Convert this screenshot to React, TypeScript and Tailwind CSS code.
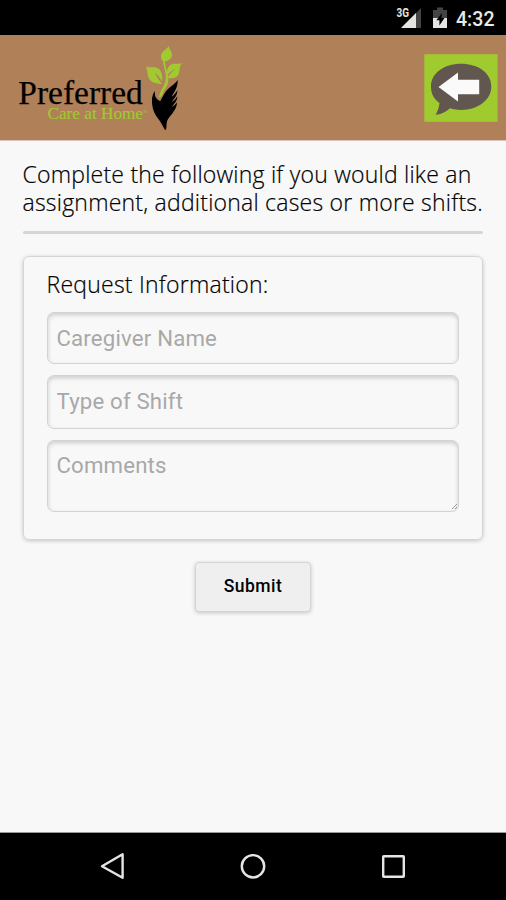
import React from "react";

function StatusBar() {
  return (
    <div className="h-[35px] shrink-0 bg-black">
      <svg width="506" height="35" viewBox="0 0 506 35" role="img" aria-label="3G, charging, 4:32">
        <path d="M421 8V28H401Z" fill="#444" />
        <path d="M416 13V28H401Z" fill="#e4e4e4" />
        <text x="396.5" y="17" fontFamily="Roboto, sans-serif" fontWeight="700" fontSize="12" textLength="12.5" lengthAdjust="spacingAndGlyphs" fill="#e4e4e4">3G</text>
        <path d="M433 10H437V7.5H443V10H447V18H433Z" fill="#444" />
        <path d="M433 18H447V28H433Z" fill="#e4e4e4" />
        <path d="M442 13L436.3 20.3H439.4V25.5L444.5 18H441.4Z" fill="#000" />
        <text x="456" y="25.8" fontFamily="Roboto, sans-serif" fontWeight="500" fontSize="19.8" textLength="38.5" lengthAdjust="spacingAndGlyphs" fill="#e8e8e8">4:32</text>
      </svg>
    </div>
  );
}

function Logo() {
  return (
    <svg width="190" height="105" viewBox="0 35 190 105" role="img" aria-label="Preferred Care at Home">
      <text x="18.3" y="104" fontFamily="'Liberation Serif', serif" fontSize="33.5" textLength="124.5" lengthAdjust="spacingAndGlyphs" fill="#000" stroke="#000" strokeWidth="0.25">Preferred</text>
      <text x="47.5" y="119" fontFamily="'Liberation Serif', serif" fontSize="17.3" textLength="95.5" lengthAdjust="spacingAndGlyphs" fill="#a2c92f" stroke="#a2c92f" strokeWidth="0.15">Care at Home</text>
      <text x="143" y="114" fontFamily="'Liberation Serif', serif" fontSize="6" fill="#a2c92f">®</text>
      <g transform="translate(140 40) scale(0.33333)">
        <path d="M45 153C35 165 35 181 37 196C39 220 55 236 63 248C69 257 70 264 77 271C82 260 77 249 84 238C92 225 111 209 111 187C107 194 100 199 95 202C101 193 112 185 112 169C108 177 101 183 96 186C101 176 113 167 112 150C109 158 101 166 95 170C100 159 114 145 113 120C106 130 94 138 84 147C74 156 69 169 61 183C53 181 42 171 45 153Z" fill="#000" />
        <path d="M69 62C71 83 79 97 77 119C75 137 60 151 57 172C64 171 66 166 69 158C73 147 84 140 85 120C86 98 75 85 75 62Z" fill="#a2c92f" />
        <g fill="#a2c92f">
          <path d="M87 17C79 30 62 33 63 50C63 61 70 66 76 64C88 61 96 55 96 44C96 32 86 30 87 17Z" />
          <path d="M18 79C24 97 22 112 31 121C39 130 55 131 67 133C59 123 48 107 45 99C55 106 62 117 67 125C68 99 62 86 46 82C35 80 27 84 18 79Z" />
          <path d="M126 69C115 75 101 67 91 75C80 81 81 99 78 111C88 97 97 91 106 86C97 96 88 102 82 113C96 117 111 115 116 102C120 91 117 80 126 69Z" />
        </g>
      </g>
    </svg>
  );
}

function BackButton() {
  return (
    <button aria-label="Back" className="mr-[8px] mt-[19px] h-[68px] w-[74px]">
      <svg width="74" height="68" viewBox="0 0 74 68">
        <path d="M0.3 0.3H73.6V67.8H0.3Z" fill="#a0cb2f" />
        <path d="M37 9.8C20 9.8 7 19.3 7 32.5C7 40 10 45 15.5 49C15 54 13.5 57.5 11.5 60.8C17 60.5 22 58 26 54.3C29.5 55.3 33 55.9 37 55.9C54 55.9 67.3 46 67.3 32.5C67.3 19 54 9.8 37 9.8Z" fill="#61574f" />
        <path d="M14.5 33L34 18.5V25.7H55.2V40.3H34V47.5Z" fill="#fafafa" />
      </svg>
    </button>
  );
}

const fieldStyle =
  "block w-full resize-none rounded-[7px] border-[1.5px] border-[#d3d3d3] bg-[#f8f8f8] px-[9px] font-[Roboto,sans-serif] text-[22.2px] font-normal leading-[28px] tracking-[0.18px] text-[#222] placeholder:text-[#a8a8a8] shadow-[inset_0_2px_4px_rgba(0,0,0,0.18)] outline-none";

function RequestForm() {
  return (
    <form onSubmit={(e) => e.preventDefault()}>
      <div className="mt-[22px] h-[284px] rounded-[6px] border-[1.5px] border-[#d5d5d5] pl-[22.5px] pr-[23px] pt-[13px] shadow-[0_1px_4px_rgba(0,0,0,0.2)]">
        <h2 className="text-[23px] leading-[28px] tracking-[0.24px] [-webkit-text-stroke:0.2px_#000]">Request Information:</h2>
        <div className="mt-[14px] flex flex-col">
          <input aria-label="Caregiver Name" placeholder="Caregiver Name" className={`${fieldStyle} h-[52px]`} />
          <input aria-label="Type of Shift" placeholder="Type of Shift" className={`${fieldStyle} mt-[11px] h-[54px] pb-[2px]`} />
          <div className="relative mt-[11px]">
            <textarea aria-label="Comments" placeholder="Comments" className={`${fieldStyle} h-[72px] pt-[10px]`} />
            <svg className="absolute bottom-[2px] right-[1px]" width="7" height="7" viewBox="0 0 7 7" fill="none" stroke="#858585" strokeWidth="0.8">
              <path d="M1 6L6 1M4 6L6 4" />
            </svg>
          </div>
        </div>
      </div>
      <button className="mx-auto mt-[22px] block h-[50px] w-[116px] rounded-[4px] border-[1.5px] border-[#d5d5d5] bg-[#efefef] pb-[1px] font-[Roboto,sans-serif] text-[17.5px] font-medium tracking-[0.45px] text-black shadow-[0_1px_4px_rgba(0,0,0,0.2)]">
        Submit
      </button>
    </form>
  );
}

function NavigationBar() {
  return (
    <nav className="h-[68px] shrink-0 border-t border-[#999] bg-black">
      <svg width="506" height="67" viewBox="0 833 506 67" fill="none" stroke="#e5e5e5" strokeWidth="2.4" strokeLinejoin="round">
        <path d="M122.6 854.3V877.7L102 866.2Z" />
        <circle cx="253" cy="866.3" r="11.2" />
        <rect x="383.2" y="856.2" width="20.6" height="20.6" rx="0.6" />
      </svg>
    </nav>
  );
}

export default function App() {
  return (
    <div className="flex h-[900px] w-[506px] flex-col overflow-hidden bg-[#f8f8f8]">
      <StatusBar />
      <header className="flex h-[106px] shrink-0 items-start justify-between border-b border-[#d8c6b8] bg-[#b08059]">
        <Logo />
        <BackButton />
      </header>
      <main className="flex-1 px-[23px] pt-[19px] font-['Open_Sans',sans-serif] font-light text-black">
        <p className="-ml-[0.5px] whitespace-nowrap text-[23px] leading-[28px] tracking-[0.22px] [-webkit-text-stroke:0.2px_#000]">
          Complete the following if you would like an
          <br />
          assignment, additional cases or more shifts.
        </p>
        <hr className="mt-[15px] h-[3px] rounded-full border-0 bg-[#d6d6d6]" />
        <RequestForm />
      </main>
      <NavigationBar />
    </div>
  );
}
